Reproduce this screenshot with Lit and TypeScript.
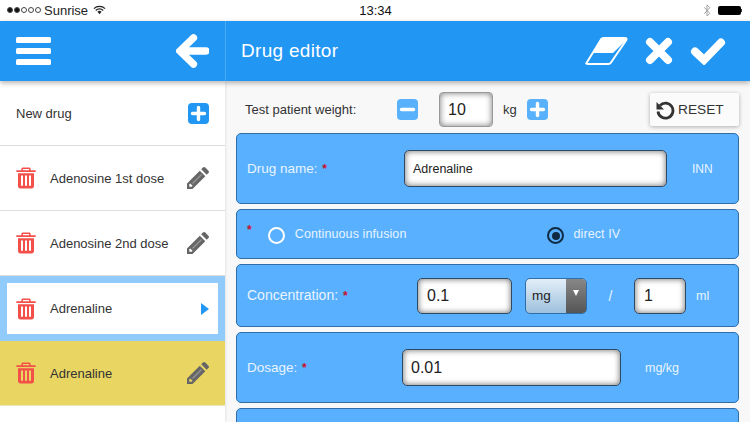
import { LitElement, html, css } from "lit";
import { customElement } from "lit/decorators.js";

const trash = html`<svg class="trash" viewBox="0 0 20 22" width="20" height="22">
  <path fill="#f4504a" d="M7 0.6h6c.9 0 1.500.6 1.600 1.400l.2 1.200H19c.6 0 1 .3 1 .8s-.4.9-1 .9H1c-.6 0-1-.4-1-.9s.4-.8 1-.8h4.200l.2-1.200C5.500 1.200 6.100.6 7 .6zm0 1.500-.2 1.100h6.400L13 2.100zM2 6.200h16V19c0 1.500-1 2.500-2.400 2.500H4.400C3 21.500 2 20.500 2 19zm3 2.300v10.300h2V8.500zm4 0v10.300h2V8.500zm4 0v10.300h2V8.500z"/>
</svg>`;
const pencil = html`<svg class="pencil" viewBox="0 0 22 22" width="22" height="22">
  <path fill="#666" d="M0 22v-5.500L12.800 3.700l5.500 5.500L5.500 22zM3.200 16.400l-.9.9v2.400h2.400l.9-.9zM14.200 2.300l1.700-1.700c.7-.7 1.700-.7 2.400 0l3.100 3.100c.7.700.7 1.700 0 2.400l-1.700 1.700z"/>
  <path fill="#e8e8e8" opacity=".35" d="M5 16l9-9 1 1-9 9z"/>
</svg>`;
const plusIcon = (c: string) => html`<svg viewBox="0 0 21 21" width="21" height="21">
  <rect width="21" height="21" rx="4" fill="${c}"/>
  <path d="M10.500 4.500v12M4.500 10.500h12" stroke="#fff" stroke-width="3.400" stroke-linecap="round"/>
</svg>`;
const minusIcon = html`<svg viewBox="0 0 21 21" width="21" height="21">
  <rect width="21" height="21" rx="4" fill="#5ab1fb"/>
  <path d="M4.500 10.500h12" stroke="#fff" stroke-width="3.400" stroke-linecap="round"/>
</svg>`;
const star = html`<span class="star">*</span>`;

@customElement("app-root")
export class AppRoot extends LitElement {
  static styles = css`
    :host { display: block; width: 750px; height: 422px; overflow: hidden; background: #fff;
      font-family: "Liberation Sans", Arial, sans-serif; color: #333; }
    svg { display: block; flex: none; }

    .status { height: 20px; padding: 0 8px 0 7px; display: grid; grid-template-columns: 1fr auto 1fr;
      align-items: center; background: #fff; color: #222; font-size: 13px; }
    .status-left { display: flex; align-items: center; gap: 3px; }
    .dots { display: flex; gap: 1px; }
    .dot { width: 6px; height: 6px; border-radius: 50%; border: 0.5px solid #444; box-sizing: border-box; }
    .dot.on { background: #111; }
    .time { font-size: 13px; padding-left: 2px; color: #111; }
    .status-right { display: flex; justify-content: flex-end; align-items: center; gap: 7px; }
    .battery { width: 23px; height: 9px; background: #000; border-radius: 2px; position: relative; margin-right: 1px; }
    .battery::after { content: ""; position: absolute; left: 23px; top: 3px; width: 1px; height: 3px; background: #333; }

    .topbar { height: 60px; margin-top: 1px; display: grid; grid-template-columns: 226px 1fr; background: #2196f3;
      box-shadow: 0 2px 5px rgba(0,0,0,.3); position: relative; z-index: 2; }
    .top-left { display: flex; align-items: center; justify-content: space-between; padding: 0 16px 0 16px;
      border-right: 1px solid #4ba9f5; }
    .top-right { display: flex; align-items: center; justify-content: space-between; padding: 0 24px 0 15px; color: #fff; }
    .title { font-size: 19px; color: #fff; letter-spacing: .3px; }
    .actions { display: flex; align-items: center; gap: 17px; }
    .eraser { margin-right: -1px; }

    .main { display: grid; grid-template-columns: 225px 1fr; height: 341px; }
    .side { background: #fff; box-shadow: 1px 0 2px rgba(0,0,0,.08); position: relative; overflow: hidden; }
    .row { height: 65px; box-sizing: border-box; display: flex; align-items: center; padding: 0 16px; font-size: 13px;
      color: #333; border-bottom: 1px solid #ddd; }
    .row.new { justify-content: space-between; }
    .row .name { margin-left: 14px; flex: 1; }
    .row.sel { border: 7px solid #90cbfb; padding: 0 9px; background: #fff; }
    .row.yellow { background: #e8d562; color: #333; border-bottom-color: #e8e3c0; }
    .arrow { width: 0; height: 0; border-left: 8px solid #2196f3; border-top: 6px solid transparent; border-bottom: 6px solid transparent; }

    .form { background: #f8f8f8; padding: 0 11px 0 11px; overflow: hidden; }
    .weight { height: 47px; padding: 5px 0 0 9px; display: flex; align-items: center; font-size: 13px; color: #333; }
    .weight .lbl { width: 152px; }
    .wbox { width: 54px; height: 35px; box-sizing: border-box; margin-left: 21px; border: 1.500px solid #999; border-radius: 4px;
      background: #fff; box-shadow: inset 0 0 6px rgba(0,0,0,.55); font-size: 16px; display: flex; align-items: center; padding-left: 8px; color: #222; }
    .kg { margin: 0 10px 0 10px; font-size: 13px; }
    .reset { margin-left: auto; width: 89px; height: 33px; box-sizing: border-box; background: #fbfbfb; box-shadow: 0 1px 4px rgba(0,0,0,.3);
      border-radius: 2px; display: flex; align-items: center; gap: 3px; padding-left: 5px; font-size: 13.700px; color: #333; }

    .card { box-sizing: border-box; background: #58b0ff; border: 1.500px solid #2f6ea8; border-radius: 5px; margin-bottom: 5px;
      display: flex; align-items: center; padding: 0 10px; color: #e9f4ff; font-size: 13.500px; }
    .c1 { height: 71px; }
    .c2 { height: 50px; }
    .c3 { height: 63px; }
    .c4 { height: 71px; }
    .c5 { height: 40px; }
    .star { color: #c8102e; font-weight: bold; font-size: 12px; margin-left: 1px; }
    .label { flex: none; }
    .input { box-sizing: border-box; height: 37px; border: 1.500px solid #2c4a66; border-radius: 5px; background: #fff;
      box-shadow: inset 0 0 6px rgba(0,0,0,.6); color: #222; display: flex; align-items: center; padding-left: 8px; font-size: 16px; flex: none; }
    .c1 .label { width: 157px; }
    .c1 .input { width: 263px; font-size: 12.500px; }
    .inn { margin-left: 25px; font-size: 12px; }
    .c2 { font-size: 12.500px; letter-spacing: .1px; }
    .c2 .star { margin: -8px 0 0 0; }
    .radio { box-sizing: border-box; width: 17px; height: 17px; border-radius: 50%; border: 2.500px solid #fff; margin-left: 16px; margin-top: 3px; flex: none; }
    .radio.on { border-color: #102a44; margin-left: 0; position: relative; }
    .radio.on::after { content: ""; position: absolute; inset: 2.500px; border-radius: 50%; background: #102a44; }
    .r-text { margin-left: 10px; margin-top: -1px; font-size: 12.500px; }
    .r-opt2 { margin-left: 141px; display: flex; align-items: center; }
    .r-opt2 .r-text { margin-left: 9px; }
    .c3 { font-size: 14px; }
    .c3 .label { width: 170px; margin-top: -1px; }
    .c3 .input { height: 36px; padding-left: 9px; }
    .c3 .i1 { width: 95px; }
    .c3 .i2 { width: 52px; }
    .select { box-sizing: border-box; width: 62px; height: 36px; margin-left: 13px; border: 1.500px solid #2f6ea8; border-radius: 5px;
      overflow: hidden; display: flex; background: linear-gradient(#e3eef8, #9dc0dc); color: #222; font-size: 13.500px; flex: none; }
    .select .v { flex: 1; display: flex; align-items: center; padding-left: 6px; }
    .select .btn { width: 20px; background: linear-gradient(#888, #555); display: flex; justify-content: center; padding-top: 11px; box-sizing: border-box; }
    .tri { width: 0; height: 0; border-top: 6px solid #fff; border-left: 3.500px solid transparent; border-right: 3.500px solid transparent; }
    .slash { width: 47px; text-align: center; flex: none; }
    .ml { margin-left: 10px; font-size: 12.500px; }
    .c4 .label { width: 155px; }
    .c4 .input { width: 219px; }
    .mgkg { margin-left: 24px; font-size: 12.500px; }
  `;

  render() {
    return html`
      <div class="status">
        <div class="status-left">
          <span class="dots">
            <i class="dot on"></i><i class="dot on"></i><i class="dot"></i><i class="dot"></i><i class="dot"></i>
          </span>
          <span class="carrier">Sunrise</span>
          <svg viewBox="0 0 14 10" width="13" height="10" style="margin-left:2px">
            <path d="M1 3.500a8.500 8.500 0 0 1 12 0M3 5.500a5.500 5.500 0 0 1 8 0" fill="none" stroke="#222" stroke-width="1.300"/>
            <path d="M4.800 7a3 3 0 0 1 4.400 0L7 9.500z" fill="#222"/>
          </svg>
        </div>
        <div class="time">13:34</div>
        <div class="status-right">
          <svg viewBox="0 0 8 14" width="8" height="13">
            <path d="M1 3.500l6 6.500-3 3V1l3 3-6 6.500" fill="none" stroke="#999" stroke-width="1"/>
          </svg>
          <span class="battery"></span>
        </div>
      </div>

      <div class="topbar">
        <div class="top-left">
          <svg viewBox="0 0 35 30" width="35" height="30">
            <rect y="1" width="35" height="6" rx="1.500" fill="#fff"/>
            <rect y="12" width="35" height="6" rx="1.500" fill="#fff"/>
            <rect y="23" width="35" height="6" rx="1.500" fill="#fff"/>
          </svg>
          <svg viewBox="0 0 34 34" width="33" height="34">
            <path d="M31 17H5M18 3.500 4 17l14 13.500" fill="none" stroke="#fff" stroke-width="7.500" stroke-linecap="round" stroke-linejoin="miter"/>
          </svg>
        </div>
        <div class="top-right">
          <div class="title">Drug editor</div>
          <div class="actions">
            <svg class="eraser" viewBox="0 0 44 30" width="44" height="30">
              <path d="M1.500 27 16 3.500c.6-1 1.300-1.500 2.500-1.500H40c1.500 0 2 1 1.200 2.200L26 26.500c-.7 1-1.400 1.500-2.500 1.500H3c-1.500 0-2.200-.4-1.500-1z" fill="none" stroke="#fff" stroke-width="2"/>
              <path d="M16 2h24c1.500 0 2 1 1.200 2.200L28 17H8.500z" fill="#fff"/>
            </svg>
            <svg viewBox="0 0 28 28" width="28" height="28">
              <path d="M5 5l18 18M23 5 5 23" stroke="#fff" stroke-width="8" stroke-linecap="round"/>
            </svg>
            <svg viewBox="0 0 36 28" width="36" height="28">
              <path d="M5 14.500 14 23 31 5.500" fill="none" stroke="#fff" stroke-width="8" stroke-linecap="round" stroke-linejoin="miter"/>
            </svg>
          </div>
        </div>
      </div>

      <div class="main">
        <div class="side">
          <div class="row new"><span>New drug</span>${plusIcon("#2196f3")}</div>
          <div class="row">${trash}<span class="name">Adenosine 1st dose</span>${pencil}</div>
          <div class="row">${trash}<span class="name">Adenosine 2nd dose</span>${pencil}</div>
          <div class="row sel">${trash}<span class="name">Adrenaline</span><i class="arrow"></i></div>
          <div class="row yellow">${trash}<span class="name">Adrenaline</span>${pencil}</div>
        </div>
        <div class="form">
          <div class="weight">
            <span class="lbl">Test patient weight:</span>
            ${minusIcon}
            <span class="wbox">10</span>
            <span class="kg">kg</span>
            ${plusIcon("#5ab1fb")}
            <div class="reset">
              <svg viewBox="0 0 20 20" width="20" height="20">
                <path d="M5 5.500a7.500 7.500 0 1 1-2 6" fill="none" stroke="#333" stroke-width="2.800"/>
                <path d="M1.500 2v7.500H9z" fill="#333"/>
              </svg>
              RESET
            </div>
          </div>
          <div class="card c1">
            <span class="label">Drug name: ${star}</span>
            <span class="input">Adrenaline</span>
            <span class="inn">INN</span>
          </div>
          <div class="card c2">
            ${star}
            <i class="radio"></i><span class="r-text">Continuous infusion</span>
            <span class="r-opt2"><i class="radio on"></i><span class="r-text">direct IV</span></span>
          </div>
          <div class="card c3">
            <span class="label">Concentration: ${star}</span>
            <span class="input i1">0.1</span>
            <span class="select"><span class="v">mg</span><span class="btn"><i class="tri"></i></span></span>
            <span class="slash">/</span>
            <span class="input i2">1</span>
            <span class="ml">ml</span>
          </div>
          <div class="card c4">
            <span class="label">Dosage: ${star}</span>
            <span class="input">0.01</span>
            <span class="mgkg">mg/kg</span>
          </div>
          <div class="card c5"></div>
        </div>
      </div>
    `;
  }
}
